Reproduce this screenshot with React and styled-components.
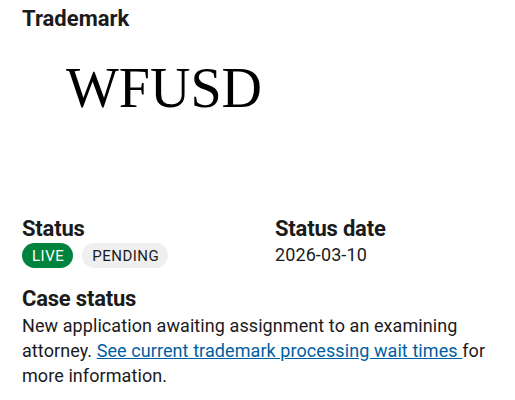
import React from "react";
import styled, { createGlobalStyle } from "styled-components";

const Global = createGlobalStyle`
  html, body { margin: 0; padding: 0; background: #fff; }
  body { font-family: "Roboto", "Liberation Sans", sans-serif; color: #1b1b1b; }
`;

const Page = styled.div`
  padding: 6px 22px 0 22px;
`;

const SectionTitle = styled.h2`
  margin: 0;
  font-family: "Roboto", "Liberation Sans", sans-serif;
  font-weight: 700;
  font-size: 22px;
  line-height: 26px;
  color: #1b1b1b;
`;

const MarkBox = styled.div`
  height: 184px;
  padding-left: 44px;
  padding-top: 28px;
  box-sizing: border-box;
`;

const MarkText = styled.div`
  font-family: "Liberation Serif", "Times New Roman", serif;
  font-size: 56px;
  line-height: 56px;
  color: #000;
`;

const Grid = styled.div`
  display: grid;
  grid-template-columns: 253px 1fr;
`;

const Field = styled.div`
  display: flex;
  flex-direction: column;
`;

const Label = styled.div`
  font-weight: 700;
  font-size: 22px;
  line-height: 26px;
  letter-spacing: -0.2px;
`;

const Value = styled.div`
  font-size: 18px;
  line-height: 25px;
  letter-spacing: 0.1px;
`;

const Tags = styled.div`
  display: flex;
  gap: 9px;
  margin-top: 1px;
`;

const Tag = styled.span`
  display: inline-flex;
  align-items: center;
  height: 25px;
  padding: 0 9px 0 10px;
  border-radius: 13px;
  font-size: 15px;
  letter-spacing: 0.5px;
  background: ${(p) => (p.$live ? "#00843d" : "#efefef")};
  color: ${(p) => (p.$live ? "#fff" : "#1b1b1b")};
`;

const Case = styled.div`
  margin-top: 18px;
`;

const Body = styled.p`
  margin: 1px 0 0 0;
  font-size: 18px;
  line-height: 25px;
  letter-spacing: 0.08px;
  max-width: 480px;
`;

const Link = styled.a`
  color: #005ea2;
  text-decoration: underline;
`;

export default function App() {
  return (
    <>
      <Global />
      <Page>
        <SectionTitle>Trademark</SectionTitle>
        <MarkBox>
          <MarkText>WFUSD</MarkText>
        </MarkBox>
        <Grid>
          <Field>
            <Label>Status</Label>
            <Tags>
              <Tag $live>LIVE</Tag>
              <Tag>PENDING</Tag>
            </Tags>
          </Field>
          <Field>
            <Label>Status date</Label>
            <Value>2026-03-10</Value>
          </Field>
        </Grid>
        <Case>
          <Label>Case status</Label>
          <Body>
            New application awaiting assignment to an examining attorney.{" "}
            <Link href="#">See current trademark processing wait times </Link>
            for more information.
          </Body>
        </Case>
      </Page>
    </>
  );
}
